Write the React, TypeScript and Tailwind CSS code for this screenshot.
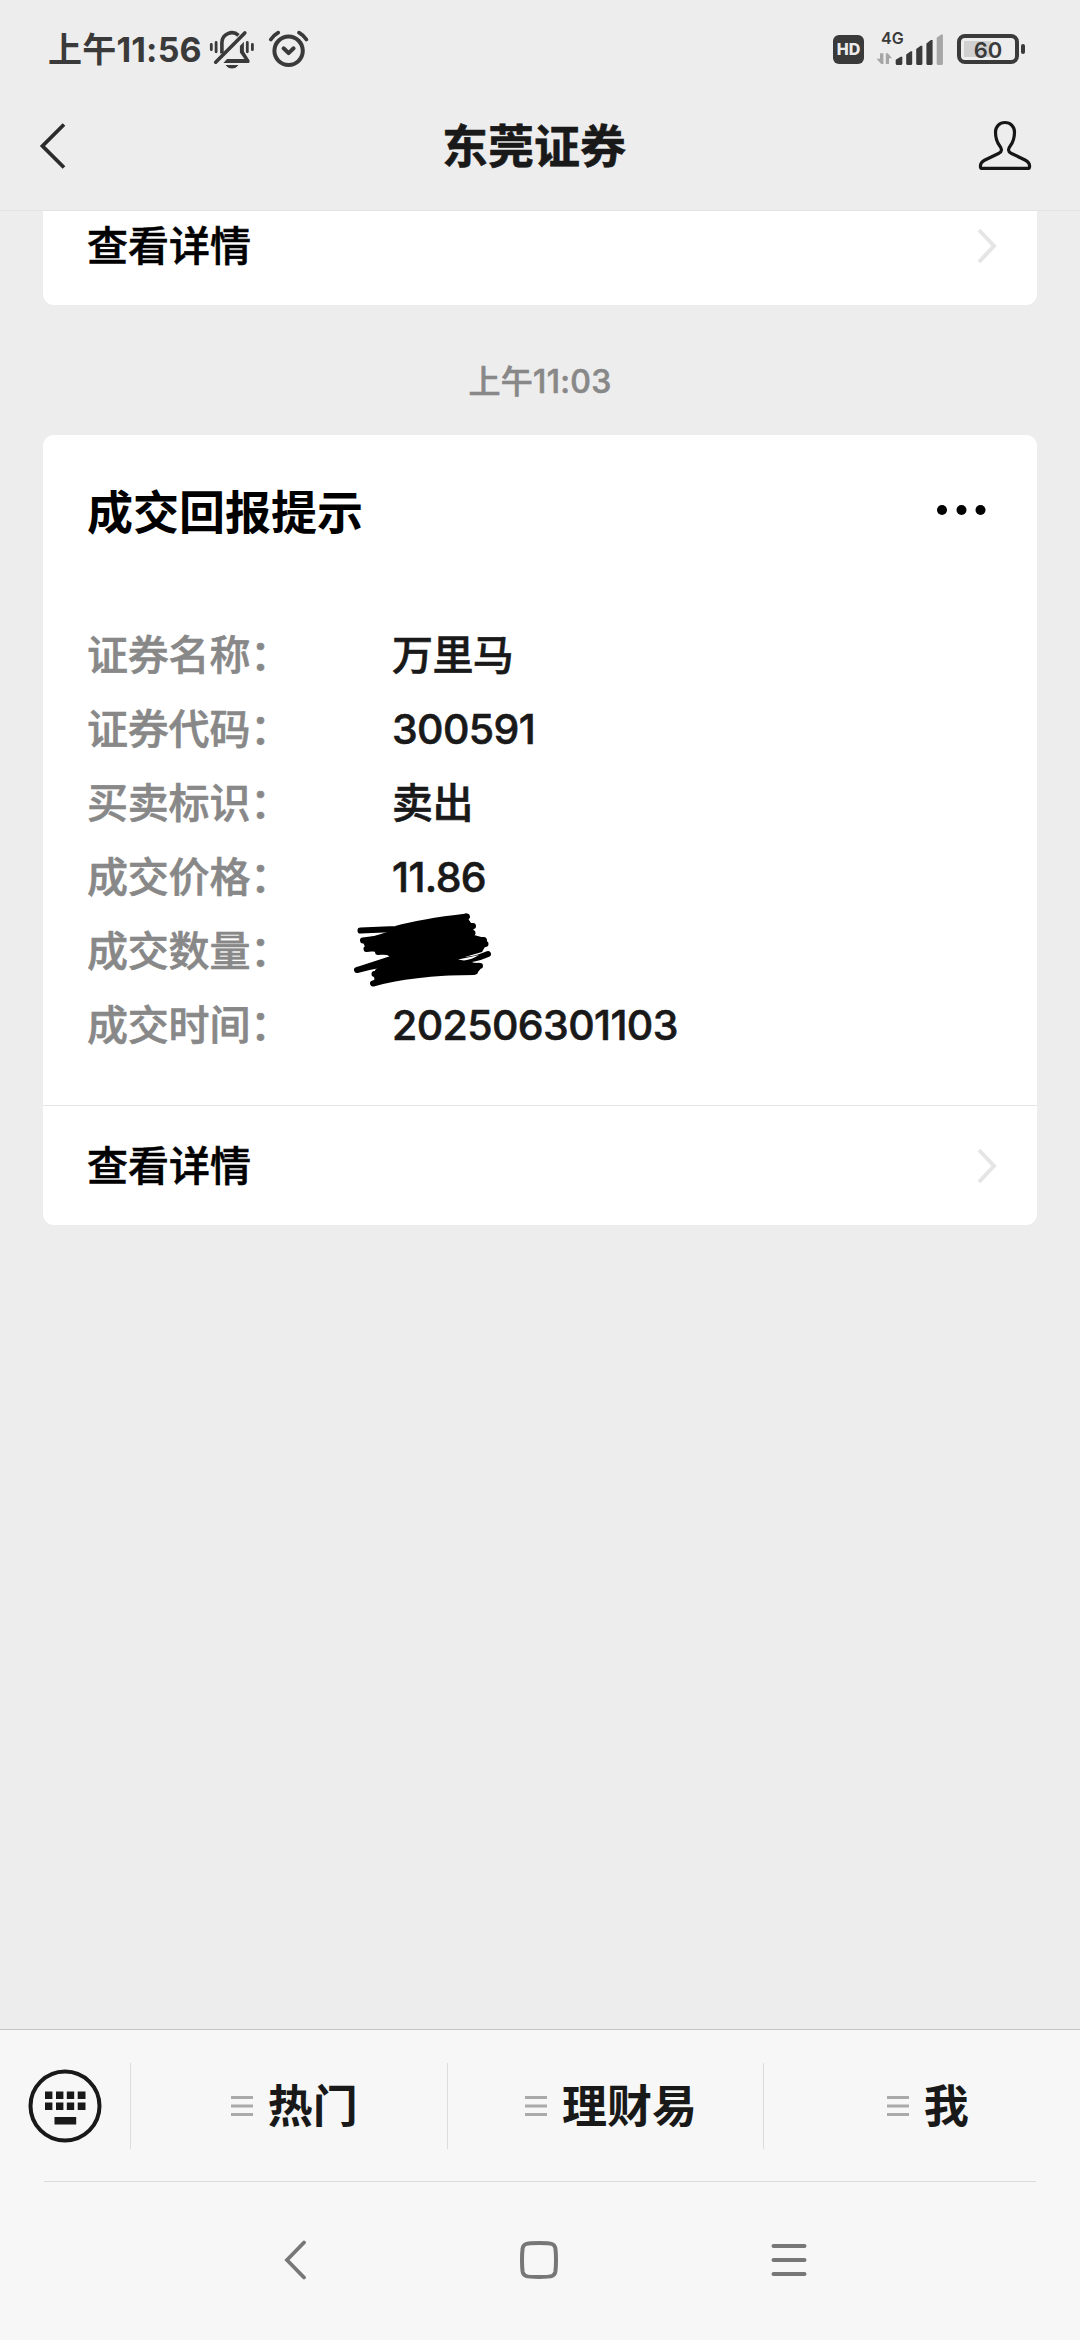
import { clsx } from "clsx";
import type { ReactNode } from "react";

interface Field {
  label: string;
  value?: string;
}

const fields: Field[] = [
  { label: "证券名称", value: "万里马" },
  { label: "证券代码", value: "300591" },
  { label: "买卖标识", value: "卖出" },
  { label: "成交价格", value: "11.86" },
  { label: "成交数量" },
  { label: "成交时间", value: "202506301103" },
];

const menus = ["热门", "理财易", "我"];

function MutedBellIcon() {
  return (
    <svg className="h-[44px] w-[48px]" viewBox="208 28 48 44" fill="none" stroke="#3a3a3a" strokeLinecap="round">
      <path d="M211.3 44.3v5.4M216.1 42.4v9.4M247.3 42.4v9.4M252.4 44.3v5.4" strokeWidth="2.8" />
      <path d="M221.9 53.5V42.5a10 10 0 0 1 16.6-7.2" strokeWidth="3.6" strokeLinecap="butt" />
      <path d="M215.7 62.2 244.8 32.9" strokeWidth="3.6" />
      <path d="M223.4 63l3.6-4h17.4l-4.5-6.4V46l4-4.2v9.8l5.8 9.2-.6 2.2z" fill="#3a3a3a" stroke="none" />
      <path d="M225.6 65h12.8c-1.6 2.4-3.8 3.6-6.4 3.6s-4.8-1.2-6.4-3.6z" fill="#3a3a3a" stroke="none" />
    </svg>
  );
}

function AlarmIcon() {
  return (
    <svg className="h-[44px] w-[42px]" viewBox="268 28 42 44" fill="none" stroke="#3a3a3a" strokeLinecap="round" strokeLinejoin="round">
      <circle cx="288.6" cy="50.8" r="14.2" strokeWidth="4" />
      <path d="M283.6 48.3l5 4.8 5-4.8" strokeWidth="4" />
      <path d="M270.8 39.5q3-4.3 7.4-6.8M306.4 39.5q-3-4.3-7.4-6.8" strokeWidth="3.8" />
    </svg>
  );
}

function SignalIcon() {
  return (
    <svg className="h-[36px] w-[68px]" viewBox="876 31 68 36" fill="#3a3a3a">
      <path d="M876.5 58.8H880V53.200h3.400V64h-2.200zM892 58.200h-3V64h-3.200V53.200h2z" fill="#a6a6a6" />
      <path d="M895.7 59.8l5-3h1.6V63.5a1.5 1.5 0 0 1-1.5 1.5h-3.6a1.5 1.5 0 0 1-1.5-1.5z" />
      <path d="M906.2 54.5l4.5-3.3h1.5V63.5a1.5 1.5 0 0 1-1.5 1.5h-3a1.5 1.5 0 0 1-1.5-1.5z" />
      <path d="M916.2 49l4.5-3.3h1.7V63.5a1.5 1.5 0 0 1-1.5 1.5h-3.2a1.5 1.5 0 0 1-1.5-1.5z" />
      <path d="M926.4 43.4l4.5-3.4h1.7V63.5a1.5 1.5 0 0 1-1.5 1.5h-3.2a1.5 1.5 0 0 1-1.5-1.5z" />
      <path d="M936.7 37.8l4.5-3.3h1.7V63.5a1.5 1.5 0 0 1-1.5 1.5h-3.2a1.5 1.5 0 0 1-1.5-1.5z" fill="#a6a6a6" />
    </svg>
  );
}

function ChevronRight() {
  return (
    <svg className="h-[36px] w-[20px]" viewBox="0 0 20 36" fill="none" stroke="#e5e5e5" strokeWidth="4">
      <path d="M2 2l15 16L2 34" />
    </svg>
  );
}

function PersonIcon() {
  return (
    <svg className="h-[52px] w-[54px]" viewBox="978 120 54 52" fill="none" stroke="#161616" strokeWidth="3.2" strokeLinejoin="round">
      <path d="M1005 122.5c-5.7 0-9.5 4.2-9.5 9.5 0 6.5 1 9.8 4.3 14 2.3 3 2.3 5.4-.8 7.2l-14.5 7c-3 1.5-4.1 3.2-4.1 6.2 0 1.3.7 2 2 2h45.2c1.3 0 2-.7 2-2 0-3-1.1-4.7-4.1-6.2l-14.5-7c-3.1-1.8-3.1-4.2-.8-7.2 3.3-4.2 4.3-7.5 4.3-14 0-5.3-3.8-9.5-9.5-9.5z" />
    </svg>
  );
}

function KeyboardIcon() {
  return (
    <svg className="h-[74px] w-[74px]" viewBox="0 0 74 74" fill="#191919">
      <circle cx="37" cy="37" r="34.5" fill="none" stroke="#191919" strokeWidth="4" />
      <path d="M17 22.5h7.4v7.4H17zM28 22.5h7.4v7.4H28zM38.8 22.5h7.4v7.4h-7.4zM49.7 22.5h7.8v7.4h-7.8z" />
      <path d="M17 33.5h7.4v7.4H17zM28 33.5h7.4v7.4H28zM38.8 33.5h7.4v7.4h-7.4zM49.7 33.5h7.8v7.4h-7.8zM26.5 48h21.7v7.6H26.5z" />
    </svg>
  );
}

// Marker scribble that hides the traded quantity
function Scribble() {
  return (
    <svg className="-mt-[2px] -ml-[40px] h-[78px] w-[142px] shrink-0" viewBox="352 912 142 78" stroke="#000" strokeWidth="6" strokeLinecap="round" strokeLinejoin="round">
      <path d="M384 933L396 929Q420 922 467 917L473 926 474 935 485 938 486 945 482 952 458 959 470 961 480 966 477 973Q410 973 374 983L375 970 386 960 390 956 366 949 362 940z" stroke="none" />
      <path fill="none" d="M360.5 930.5L396 929Q420 922 467 916.5L398 934L473 926L363 940.5L385 939L472.5 933L366.5 949Q386 946 392 955L484 940L378 952L485.5 944L398 958M488 954Q472 961 456 960L404 963Q386 962 357 970L400 956M400 963L480 966L374.5 974L474 972L479 966M376 975L475 971.5Q410 973 373 983.5L390 978" />
      <path d="M458 959.5Q468 957.5 479 955Q472 959.5 464 960.5z" fill="#fff" stroke="none" />
    </svg>
  );
}

function StatusBar() {
  return (
    <div className="flex h-[98px] items-center pr-[55px] pl-[48px] font-semibold text-[#3a3a3a]">
      <span className="pt-[2px] text-[34px] leading-none font-bold tracking-[0.2px]">上午11:56</span>
      <div className="ml-auto flex items-center">
        <span className="mr-[12px] flex h-[29px] w-[31px] items-center justify-center rounded-[6px] bg-[#3a3a3a] text-[16px] leading-none font-extrabold text-[#ececec]">
          HD
        </span>
        <div className="relative">
          <SignalIcon />
          <span className="absolute -top-px left-[5px] text-[16px] leading-none">4G</span>
        </div>
        <div className="ml-[13px] flex h-[30px] w-[62px] items-center justify-center rounded-[8px] border-4 border-[#3a3a3a] bg-[linear-gradient(#d0d0d0,#d0d0d0)] bg-[length:27px_16px] bg-[position:3px_3px] bg-no-repeat pt-px text-[22px] leading-none">
          60
        </div>
        <span className="ml-[2px] h-[10px] w-[4px] rounded-[2px] bg-[#3a3a3a]" />
      </div>
    </div>
  );
}

function CardLink() {
  return (
    <div className="flex h-[119px] shrink-0 items-center justify-between pr-[40px] pl-[44px]">
      <span className="pt-[3px] text-[41px] font-medium text-black [-webkit-text-stroke:0.6px]">查看详情</span>
      <ChevronRight />
    </div>
  );
}

function Card({ className, children }: { className?: string; children: ReactNode }) {
  return <section className={clsx("mx-[43px] flex flex-col bg-white", className)}>{children}</section>;
}

export default function App() {
  return (
    <div className="flex h-[2340px] w-[1080px] flex-col overflow-hidden bg-[#ededed] font-[Inter,'Noto_Sans_CJK_SC',sans-serif] text-[#191919]">
      <header className="h-[211px] shrink-0 border-b border-[#e3e3e3]">
        <div className="relative">
          <StatusBar />
          <div className="absolute top-[28px] left-[208px] flex gap-[12px]">
            <MutedBellIcon />
            <AlarmIcon />
          </div>
        </div>
        <div className="flex h-[95px] items-center justify-between pr-[48px] pl-[39px]">
          <svg className="h-[48px] w-[51px]" viewBox="0 0 51 48" fill="none" stroke="#2b2b2b" strokeWidth="3.8">
            <path d="M25 2.5L3.5 24 25 45.5" />
          </svg>
          <h1 className="pt-[2px] text-[46px] font-bold [-webkit-text-stroke:0.6px]">东莞证券</h1>
          <PersonIcon />
        </div>
      </header>

      <main className="flex-1">
        <Card className="h-[94px] justify-end overflow-hidden rounded-b-[11px]">
          <CardLink />
        </Card>

        <p className="flex h-[130px] items-center justify-center pt-[24px] text-[32px] font-medium tracking-[0.3px] text-[#888] [-webkit-text-stroke:0.6px]">
          上午11:03
        </p>

        <Card className="rounded-[11px]">
          <div className="flex h-[153px] items-center justify-between pr-[51px] pl-[44px]">
            <h2 className="pt-[2px] text-[46px] font-bold text-black">成交回报提示</h2>
            <svg className="mb-[3px] h-[10px] w-[49px]" viewBox="0 0 49 10">
              <circle cx="5" cy="5" r="5" />
              <circle cx="24.5" cy="5" r="5" />
              <circle cx="43.5" cy="5" r="5" />
            </svg>
          </div>
          <dl className="mt-[30px] pb-[43px] pl-[44px] text-[41px] font-medium [-webkit-text-stroke:0.6px]">
            {fields.map((field) => (
              <div key={field.label} className="flex h-[74px] items-center pt-[2px]">
                <dt className="w-[305px] shrink-0 tracking-[-0.2px] text-[#888]">{field.label}：</dt>
                <dd className="tracking-[-0.6px]">{field.value ?? <Scribble />}</dd>
              </div>
            ))}
          </dl>
          <div className="border-t border-[#e5e5e5]">
            <CardLink />
          </div>
        </Card>
      </main>

      <footer className="h-[311px] shrink-0 border-t border-[#c4c4c4] bg-[#f7f7f7]">
        <div className="flex h-[151px] items-center">
          <div className="flex w-[130px] justify-center">
            <KeyboardIcon />
          </div>
          {menus.map((menu) => (
            <div
              key={menu}
              className="flex h-[86px] flex-1 items-center justify-center gap-[15px] border-l border-[#dcdcdc] pl-[11px]"
            >
              <svg className="h-[20px] w-[22px]" viewBox="0 0 22 20" stroke="#aaa" strokeWidth="3">
                <path d="M0 1.5h22M0 10h22M0 18.5h22" />
              </svg>
              <span className="pt-[2px] text-[45px] leading-none font-bold">{menu}</span>
            </div>
          ))}
        </div>
        <div className="mx-[44px] h-px bg-[#dcdcdc]" />
        <nav className="flex h-[156px] items-center justify-between pr-[273px] pl-[284px]">
          <svg className="h-[40px] w-[22px]" viewBox="0 0 22 40" fill="none" stroke="#777" strokeWidth="3.8" strokeLinecap="round">
            <path d="M20 2.5L3 20l17 17.5" />
          </svg>
          <svg className="h-[40px] w-[40px]" viewBox="0 0 40 40" fill="none" stroke="#777" strokeWidth="4">
            <path d="M20 3c7 0 11 .2 13 1 2.2.9 3 2 3.4 4.5.4 3 .6 7 .6 11.5s-.2 8.500-.6 11.500C36 34 35.200 35.100 33 36c-2 .8-6 1-13 1s-11-.2-13-1c-2.200-.9-3-2-3.400-4.500C3.200 28.500 3 24.500 3 20s.2-8.500.6-11.500C4 6 4.800 4.900 7 4c2-.8 6-1 13-1z" />
          </svg>
          <svg className="h-[40px] w-[36px]" viewBox="0 0 36 40" stroke="#777" strokeWidth="4" strokeLinecap="round">
            <path d="M2.5 6h31M2.5 20h31M2.5 34h31" />
          </svg>
        </nav>
      </footer>
    </div>
  );
}
